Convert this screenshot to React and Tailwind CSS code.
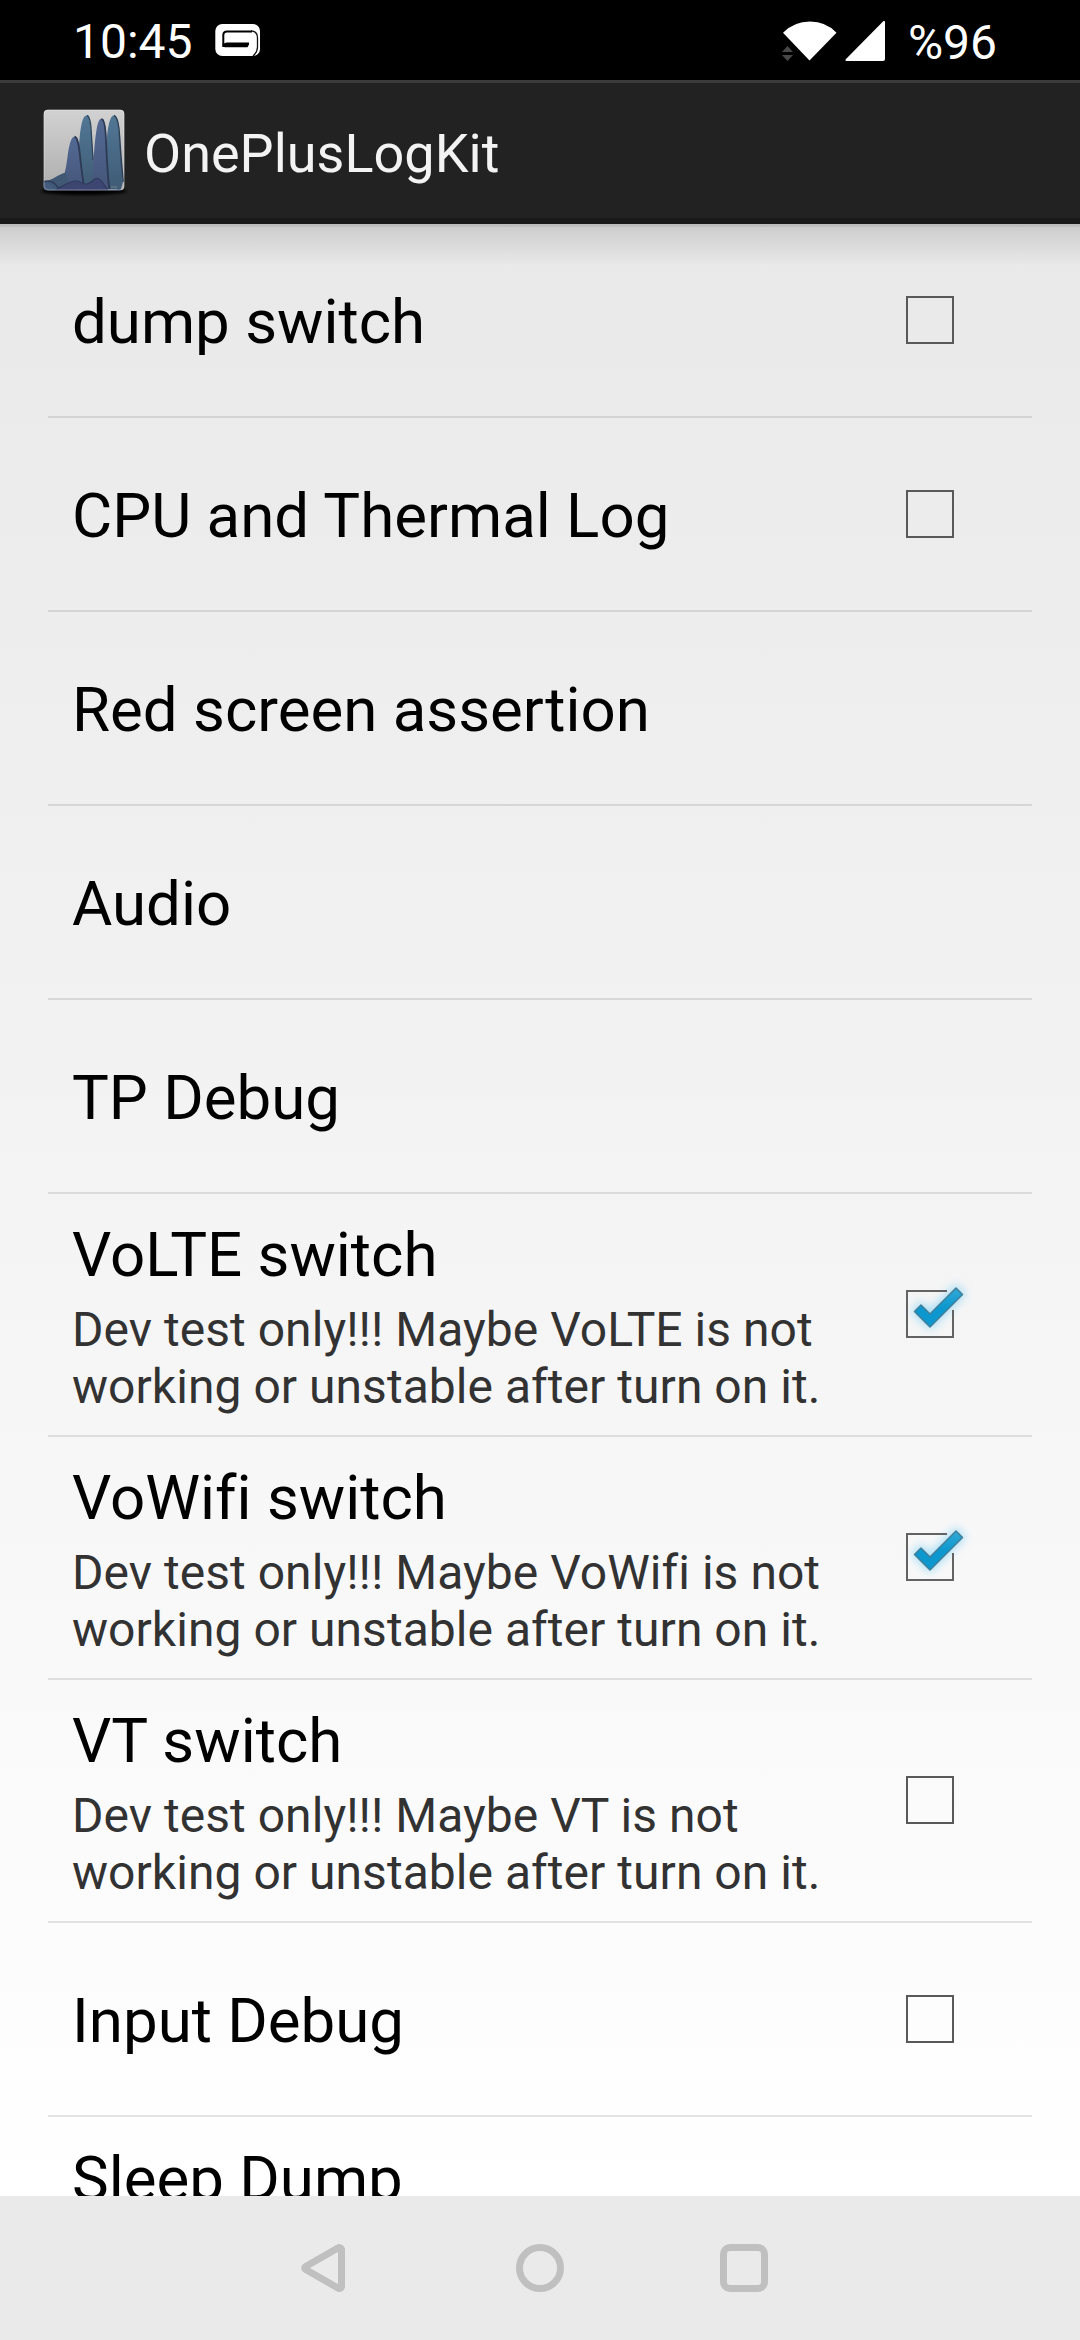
const items = [
  { title: "dump switch", checked: false },
  { title: "CPU and Thermal Log", checked: false },
  { title: "Red screen assertion" },
  { title: "Audio" },
  { title: "TP Debug" },
  { title: "VoLTE switch", summary: "Dev test only!!! Maybe VoLTE is not working or unstable after turn on it.", checked: true },
  { title: "VoWifi switch", summary: "Dev test only!!! Maybe VoWifi is not working or unstable after turn on it.", checked: true },
  { title: "VT switch", summary: "Dev test only!!! Maybe VT is not working or unstable after turn on it.", checked: false },
  { title: "Input Debug", checked: false },
];

function GameIcon() {
  return (
    <svg className="ml-[22px] mt-[24px]" width="46" height="32" viewBox="0 0 46 32">
      <rect x="0.3" y="0" width="44.7" height="32" rx="7" fill="#fff" />
      <path d="M8.300 23 V11 Q8.300 7.500 12 7.500 H37" fill="none" stroke="#000" strokeWidth="2" />
      <path d="M36 6.800 Q42.500 7 42.500 14 V23 Q42.500 28 38 32" fill="none" stroke="#111" strokeWidth="1.300" />
      <path d="M7.500 20 L11.500 18.500 H34 V20.500 L32.500 23.300 H10 Q8 23.300 7.500 20 Z" fill="#000" />
    </svg>
  );
}

function StatusBar() {
  return (
    <header className="flex h-[80px] shrink-0 items-start bg-black text-[48px] leading-[56px] text-white">
      <span className="ml-[73px] mt-[14px]">10:45</span>
      <GameIcon />
      <svg className="ml-auto mt-[20px]" width="56" height="42" viewBox="0 0 56 42">
        <path d="M1 12.700 Q12 1.500 28 1.500 T54.500 12.700 L27.500 40.500 Z" fill="#fff" />
        <path d="M0 32 L5.500 26 L11 32 Z M0 35 H11 L5.500 41 Z" fill="#484848" />
      </svg>
      <svg className="ml-[7px] mt-[20px]" width="41" height="42" viewBox="0 0 41 42">
        <path d="M38.500 1 Q40 0.500 40 2 V39 Q40 41 38 41 H1.500 Q-0.500 41 1 39 Z" fill="#fff" />
      </svg>
      <span className="ml-[22px] mr-[83px] mt-[15px]">%96</span>
    </header>
  );
}

function AppIcon() {
  return (
    <svg className="mb-[1px]" width="96" height="96" viewBox="0 0 96 96">
      <defs>
        <linearGradient id="plate" x1="0" y1="0" x2="0" y2="1">
          <stop offset="0" stopColor="#d2d2d2" />
          <stop offset="1" stopColor="#adadad" />
        </linearGradient>
        <linearGradient id="teal" x1="0" y1="0" x2="0" y2="1">
          <stop offset="0" stopColor="#517795" />
          <stop offset="1" stopColor="#3f5a74" />
        </linearGradient>
        <linearGradient id="indigo" x1="0" y1="0" x2="0" y2="1">
          <stop offset="0" stopColor="#536a94" />
          <stop offset="1" stopColor="#455478" />
        </linearGradient>
        <clipPath id="tile"><rect x="7.700" y="7.700" width="80.600" height="80.600" rx="4" /></clipPath>
        <filter id="soft" x="-20%" y="-200%" width="140%" height="500%"><feGaussianBlur stdDeviation="1.8" /></filter>
      </defs>
      <ellipse cx="48" cy="89" rx="43" ry="4" fill="#000" filter="url(#soft)" />
      <rect x="7.700" y="7.700" width="80.600" height="80.600" rx="4" fill="url(#plate)" />
      <g clipPath="url(#tile)">
        <path d="M69 90 C69.500 60 70 36 72.500 24 C74 16 76 13.500 77.700 13.500 C80 13.500 81.500 18 82.500 26 C84.500 45 85 62 87 80 L84 90 Z" fill="url(#teal)" />
        <path d="M78 13.500 C80.500 14 82 19 83 27 C84.500 45 85 62 87.500 80" fill="none" stroke="#2c3f54" strokeWidth="1.500" />
        <path d="M40 90 C43 70 42 40 45 25 C46.500 16 48.500 13.500 50.500 13.500 C53 13.500 54.500 20 55 29 L58 60 L60 90 Z" fill="url(#teal)" />
        <path d="M51 13.500 C53.500 14 54.700 20 55.200 29 L57 58" fill="none" stroke="#2f455c" strokeWidth="1.300" />
        <path d="M55 90 C57.500 65 58 42 60.500 28 C62 19.500 63.500 16.800 65.300 16.800 C68 16.800 69 24 69.500 32 C70.500 52 71.500 70 74 90 Z" fill="url(#indigo)" />
        <path d="M65.500 16.800 C68.500 17.500 69.200 24 69.700 32 C70.700 52 71 70 73.500 88" fill="none" stroke="#2c3a54" strokeWidth="1.800" />
        <path d="M20 90 C28 80 30 66 31.500 55 C33 42 35.500 34.700 38.300 34.700 C41.500 34.700 42.500 44 43.500 51 C45 64 46 74 48 90 Z" fill="url(#indigo)" />
        <path d="M38.500 34.700 C42 35.500 42.800 44 43.700 51 C45 64 46 72 47.500 81" fill="none" stroke="#2c3a54" strokeWidth="1.800" />
        <path d="M7 79 C17 79 22 72 30 70.500 L32 82 L18 90 H7 Z" fill="#405874" />
        <path d="M7 79.500 C15 78 19 80 23 87" fill="none" stroke="#2c3c58" strokeWidth="1.300" />
        <path d="M21 87 C29 83 33 79 40 79 C45 79 47 83 51 82 C57 80 58 75.500 62 76.500 C66 77.500 68 84 72 88 H88 V91 H16 Z" fill="#3d4671" />
        <path d="M21 87 C29 83 33 79 40 79 C45 79 47 83 51 82 C57 80 58 75.500 62 76.500 C66 77.500 68 84 72 88" fill="none" stroke="#303b5e" strokeWidth="1.200" />
        <path d="M7 81 Q14 79 21 90 H7 Z" fill="#455c7e" />
        <path d="M72 87.500 H81 M75 85 H81" stroke="#71808c" strokeWidth="1" />
      </g>
      <rect x="8.200" y="8.200" width="79.600" height="79.600" rx="4" fill="none" stroke="#fff" strokeOpacity="0.25" />
    </svg>
  );
}

function Checkbox({ checked }) {
  return (
    <svg className="shrink-0" width="96" height="96" viewBox="0 0 96 96">
      {!checked && <rect x="25" y="25" width="46" height="46" fill="none" stroke="#595959" strokeWidth="2" />}
      {checked && (
        <>
          <defs>
            <linearGradient id="tick" x1="0" y1="0" x2="0" y2="1">
              <stop offset="0" stopColor="#34a9d6" />
              <stop offset="0.5" stopColor="#0c98cf" />
              <stop offset="1" stopColor="#0c98cf" />
            </linearGradient>
            <filter id="glow" x="-40%" y="-40%" width="180%" height="180%"><feGaussianBlur stdDeviation="5" /></filter>
          </defs>
          <path d="M32 45 L39 38 L48 47 L74 21 L81 28 L48 61 Z" fill="#7fd0f5" stroke="#7fd0f5" strokeWidth="4" opacity="0.7" filter="url(#glow)" />
          <path d="M65 25 H25 V71 H71 V44" fill="none" stroke="#636363" strokeWidth="2" />
          <path d="M32.500 45.500 L39 39 L48 48 L74 22 L80.500 28.500 L48 61 Z" fill="url(#tick)" stroke="#417e98" strokeWidth="1.5" strokeLinejoin="round" />
        </>
      )}
    </svg>
  );
}

function PreferenceRow({ item }) {
  return (
    <li className={(item.summary ? "h-[243px]" : "h-[194px]") + " flex shrink-0 items-center border-b-2 border-black/10 pl-[24px]"}>
      <div className="w-[780px] pt-[4px]">
        <div className="text-[61.8px] leading-[73px] text-black">{item.title}</div>
        {item.summary && <div className="mt-[9px] text-[48px] leading-[57px] tracking-[0.04px] text-[#323232]">{item.summary}</div>}
      </div>
      {item.checked !== undefined && (
        <div className={(item.summary ? "pb-[1px]" : "") + " ml-auto mr-[54px] flex"}><Checkbox checked={item.checked} /></div>
      )}
    </li>
  );
}

function NavBar() {
  return (
    <nav className="flex h-[144px] shrink-0 items-center bg-[#eaeaea] pl-[300px]">
      <svg width="48" height="48" viewBox="0 0 48 48" fill="none" stroke="#c0c0c0" strokeWidth="7" strokeLinejoin="round">
        <path d="M41.500 5 Q40.500 2.500 37.500 4.300 L6.500 22 Q3 24 6.500 26 L37.500 43.700 Q40.500 45.500 41.500 43 Z" />
      </svg>
      <svg className="ml-[168px]" width="48" height="48" viewBox="0 0 48 48" fill="none" stroke="#c0c0c0" strokeWidth="7">
        <circle cx="24" cy="24" r="20.500" />
      </svg>
      <svg className="ml-[156px]" width="48" height="48" viewBox="0 0 48 48" fill="none" stroke="#c0c0c0" strokeWidth="7">
        <rect x="3.500" y="3.500" width="41" height="41" rx="6.500" />
      </svg>
    </nav>
  );
}

export default function App() {
  return (
    <div className="flex h-[2340px] w-[1080px] flex-col overflow-hidden bg-white font-['Roboto',sans-serif] [font-variant-ligatures:none]">
      <StatusBar />
      <div className="flex h-[144px] shrink-0 items-center border-t-[3px] border-b-[6px] border-t-[#3b3b3b] border-b-[#1a1a1a] bg-[#222222] pl-[36px]">
        <AppIcon />
        <h1 className="ml-[12px] pt-[7px] text-[54px] leading-[64px] text-[#f3f3f3]">OnePlusLogKit</h1>
      </div>
      <main className="relative min-h-0 flex-1 overflow-hidden bg-linear-to-b from-[#e9e9e9] to-white">
        <div className="absolute inset-x-0 top-0 h-[42px] border-t-[3px] border-black/18 bg-linear-to-b from-black/12 to-transparent" />
        <ul className="mx-[48px] flex flex-col">
          {items.map((item) => <PreferenceRow key={item.title} item={item} />)}
          <li className="h-[243px] shrink-0 pl-[24px] pt-[26px] text-[61.8px] leading-[73px] text-black">Sleep Dump</li>
        </ul>
      </main>
      <NavBar />
    </div>
  );
}
